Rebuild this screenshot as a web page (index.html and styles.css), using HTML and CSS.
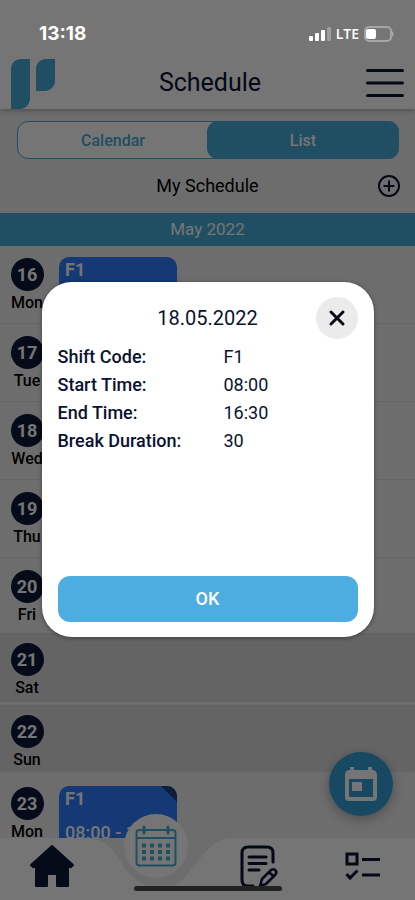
FILE: index.html
```html
<!DOCTYPE html>
<html lang="en">
<head>
<meta charset="utf-8">
<meta name="viewport" content="width=device-width, initial-scale=1">
<title>Schedule</title>
<link rel="stylesheet" href="styles.css">
</head>
<body>
<div class="app">
  <div class="status">
    <span class="time">13:18</span>
    <span class="signals">
      <svg width="22" height="14" viewBox="0 0 22 14" fill="#fff"><rect x="0" y="9" width="4" height="5" rx="1"/><rect x="6" y="6" width="4" height="8" rx="1"/><rect x="12" y="3" width="4" height="11" rx="1"/><rect x="18" y="0" width="4" height="14" rx="1" opacity=".3"/></svg>
      <span class="network">LTE</span>
      <svg width="31" height="16" viewBox="0 0 31 16"><rect x="1" y="1" width="26" height="14" rx="4" fill="none" stroke="#fff" stroke-opacity=".35" stroke-width="2"/><rect x="2" y="3" width="10" height="10" rx="2" fill="#fff"/><path d="M28 5Q31 8 28 11Z" fill="#fff" fill-opacity=".4"/></svg>
    </span>
  </div>
  <header class="header">
    <svg class="logo" width="44" height="50" viewBox="0 0 44 50" fill="#46abd6"><path d="M0 8Q2 1 9 0H19V41Q17 49 10 50H0Z"/><path d="M25 8Q27 1 34 0H44V23Q42 31 35 32H25Z"/></svg>
    <h1>Schedule</h1>
    <button class="menu" aria-label="Menu"><svg width="40" height="30" viewBox="0 0 40 30" stroke="#0b1230" stroke-width="3" stroke-linecap="round"><path d="M2.500 2.500H37.500M2.500 15H37.500M2.500 27.500H37.500"/></svg></button>
  </header>
  <main class="content">
    <div class="tabs">
      <button class="tab">Calendar</button>
      <button class="tab active">List</button>
    </div>
    <div class="subhead">
      <h2>My Schedule</h2>
      <button class="add" aria-label="Add"><svg width="24" height="24" viewBox="0 0 24 24" fill="none" stroke="#0b1230" stroke-width="2"><circle cx="12" cy="12" r="10"/><path d="M12 6.500V17.500M6.500 12H17.500"/></svg></button>
    </div>
    <div class="month">May 2022</div>
    <ul class="days">
      <li class="day"><div class="date"><b>16</b><span>Mon</span></div><div class="shift"><strong>F1</strong><span>08:00 - 16:30</span></div></li>
      <li class="day"><div class="date"><b>17</b><span>Tue</span></div></li>
      <li class="day"><div class="date"><b>18</b><span>Wed</span></div></li>
      <li class="day"><div class="date"><b>19</b><span>Thu</span></div></li>
      <li class="day friday"><div class="date"><b>20</b><span>Fri</span></div></li>
      <li class="day weekend"><div class="date"><b>21</b><span>Sat</span></div></li>
      <li class="day weekend"><div class="date"><b>22</b><span>Sun</span></div></li>
      <li class="day"><div class="date"><b>23</b><span>Mon</span></div><div class="shift folded"><strong>F1</strong><span>08:00 - 16:30</span></div></li>
    </ul>
    <button class="today" aria-label="Today"><svg width="32" height="36" viewBox="0 0 32 36"><path d="M5 1H9V4H23V1H27V4Q32 4 32 9V31Q32 35 28 35H4Q0 35 0 31V9Q0 4 5 4ZM4 13V31H28V13Z" fill="#fff" fill-rule="evenodd"/><rect x="7" y="16" width="10" height="9" fill="#fff"/></svg></button>
  </main>
  <nav class="nav">
    <svg class="navshape" viewBox="0 0 415 62" preserveAspectRatio="none"><path d="M0 0H84C112 0 116 18 126 32C142 54 172 56 186 38C202 22 208 0 234 0H415V62H0Z" fill="#fff"/></svg>
    <a href="#" aria-label="Home"><svg width="44" height="42" viewBox="0 0 44 42" fill="#0b1a38" stroke="#0b1a38" stroke-width="2" stroke-linejoin="round"><path d="M22 1L43 20L41 22H38V41H27V29H17V41H6V22H3L1 20Z"/></svg></a>
    <a href="#" class="current" aria-label="Calendar"><svg width="42" height="42" viewBox="0 0 42 42" fill="none" stroke="#46abd6" stroke-width="2"><rect x="1.500" y="5" width="39" height="35.500" rx="3"/><path d="M2 13H40"/><path d="M9 2V8M33 2V8" stroke-width="3" stroke-linecap="round"/><path d="M7 20.500H35M7 27H35M7 33.500H35" stroke-width="4" stroke-dasharray="4 4"/></svg></a>
    <a href="#" aria-label="Notes"><svg width="38" height="43" viewBox="0 0 38 43" fill="none" stroke="#0b1230" stroke-width="3" stroke-linecap="round" stroke-linejoin="round"><path d="M33 17V8Q33 2 27 2H8Q2 2 2 8V35Q2 41 8 41H13"/><path d="M9 12H26M9 18.500H26M9 25H19"/><path d="M20 41L22 34L31 25Q34 23 36 26Q37 28 35 30L26 39ZM29 27L33 31" stroke-width="2.500"/></svg></a>
    <a href="#" aria-label="Tasks"><svg width="36" height="28" viewBox="0 0 36 28" fill="none" stroke="#0b1230" stroke-width="3"><rect x="2" y="2" width="10" height="10"/><path d="M17 7.500H35M17 23H35M1.500 22L5 26L12.500 18.500"/></svg></a>
  </nav>
  <div class="overlay">
    <section class="modal" role="dialog" aria-modal="true" aria-labelledby="modal-title">
      <div class="modalhead">
        <h2 id="modal-title">18.05.2022</h2>
        <button class="close" aria-label="Close"><svg width="18" height="18" viewBox="0 0 18 18" stroke="#090a12" stroke-width="3" stroke-linecap="round"><path d="M3 3L15 15M15 3L3 15"/></svg></button>
      </div>
      <dl class="details">
        <dt>Shift Code:</dt><dd>F1</dd>
        <dt>Start Time:</dt><dd>08:00</dd>
        <dt>End Time:</dt><dd>16:30</dd>
        <dt>Break Duration:</dt><dd>30</dd>
      </dl>
      <button class="ok">OK</button>
    </section>
  </div>
  <div class="indicator"></div>
</div>
</body>
</html>
```
FILE: styles.css
```css
* { box-sizing: border-box; }
body { margin: 0; font-family: Roboto, "Liberation Sans", sans-serif; color: #0b1230; }
button { border: 0; padding: 0; background: none; font: inherit; color: inherit; }
svg { display: block; }
h1, h2, dl, dd, ul { margin: 0; padding: 0; }

.app { position: relative; height: 100vh; display: flex; flex-direction: column; overflow: hidden; background: #ededed; }
.status { position: relative; z-index: 3; display: flex; flex: none; justify-content: space-between; align-items: center; height: 56px; padding: 12px 20px 0 39px; color: #fff; }
.time { font: 700 19px/20px Inter, sans-serif; }
.signals { display: flex; align-items: center; gap: 5px; }
.network { font: 600 14px/16px "Open Sans", sans-serif; }

.header { position: relative; display: grid; grid-template-columns: 44px 1fr 40px; align-items: center; flex: none; margin-top: -56px; padding: 57px 10px 0 11px; background: #fff; box-shadow: 0 2px 4px rgba(0, 0, 0, .25); }
.logo { margin-top: 2px; }
.header h1 { font-size: 25px; line-height: 32px; font-weight: 400; text-align: center; }

.content { position: relative; flex: 1; min-height: 0; overflow: hidden; padding-top: 12px; }
.tabs { display: flex; height: 38px; margin: 0 16px 0 17px; border: 1px solid #46abd6; border-radius: 11px; background: #fff; }
.tab { flex: 1; margin: -1px; font-size: 16px; font-weight: 500; color: #46abd6; border-radius: 11px; }
.tab.active { background: #46abd6; color: #fff; }
.subhead { display: grid; grid-template-columns: 24px 1fr 24px; align-items: center; height: 54px; padding: 0 14px; }
.subhead h2 { grid-column: 2; font-size: 18px; line-height: 24px; font-weight: 400; text-align: center; color: #000; }
.month { height: 33px; background: #46abd6; color: #fff; font-size: 17px; line-height: 33px; text-align: center; }

.days { list-style: none; }
.day { display: flex; gap: 16px; height: 78px; padding: 11px 11px 0; border-bottom: 1px solid #dedede; }
.day.friday { height: 75px; border: 0; }
.day.weekend { height: 72px; padding-top: 9px; background: #dbdbdb; border-bottom: 3px solid #ededed; }
.day.weekend + .weekend { height: 70px; }
.date { display: flex; flex-direction: column; align-items: center; width: 32px; gap: 2px; }
.date b { flex: none; width: 33px; height: 33px; margin-top: 1px; border-radius: 50%; background: #0b1a38; color: #fff; font-size: 18px; line-height: 33px; text-align: center; }
.date span { font-size: 16px; line-height: 20px; font-weight: 500; color: #000; }
.shift { position: relative; display: flex; flex-direction: column; gap: 12px; width: 118px; height: 62px; padding: 2px 6px; border-radius: 10px; overflow: hidden; background: #2f7cff; color: #fff; font-size: 18px; line-height: 22px; white-space: nowrap; }
.shift span { font-weight: 500; }
.shift.folded::after { content: ""; position: absolute; top: 0; right: 0; border-style: solid; border-width: 0 16px 16px 0; border-color: transparent #1d3f83 transparent transparent; }

.today { position: absolute; right: 22px; bottom: 22px; display: grid; place-items: center; width: 64px; height: 64px; border-radius: 50%; background: #34a0d8; box-shadow: 0 3px 12px rgba(0, 0, 0, .3); }

.nav { position: relative; display: grid; grid-template-columns: repeat(4, 1fr); align-items: center; justify-items: center; flex: none; height: 62px; padding-bottom: 6px; }
.navshape { position: absolute; inset: 0; width: 100%; height: 100%; }
.nav a { position: relative; }
.nav .current { display: grid; place-items: center; width: 64px; height: 64px; margin-top: -40px; border-radius: 50%; background: #fff; }

.overlay { position: absolute; inset: 0; z-index: 2; display: flex; align-items: center; justify-content: center; padding-top: 18px; background: rgba(0, 0, 0, .54); }
.modal { display: flex; flex-direction: column; width: 80%; padding: 15px 16px; border-radius: 30px; background: #fff; box-shadow: 0 1px 4px rgba(0, 0, 0, .4); }
.modalhead { display: grid; grid-template-columns: 42px 1fr 42px; align-items: center; }
.modalhead h2 { grid-column: 2; font-size: 20px; line-height: 24px; font-weight: 400; text-align: center; }
.close { display: grid; place-items: center; width: 42px; height: 42px; border-radius: 50%; background: #ebebeb; }
.details { display: grid; grid-template-columns: 166px 1fr; margin: 4px 0 121px; font-size: 18px; line-height: 28px; }
.details dt { font-weight: 500; }
.ok { height: 46px; border-radius: 12px; background: #4eade0; color: #fff; font-size: 18px; font-weight: 500; }
.indicator { position: absolute; z-index: 3; bottom: 9px; left: 50%; width: 148px; height: 5px; margin-left: -74px; border-radius: 3px; background: #222; }
```
